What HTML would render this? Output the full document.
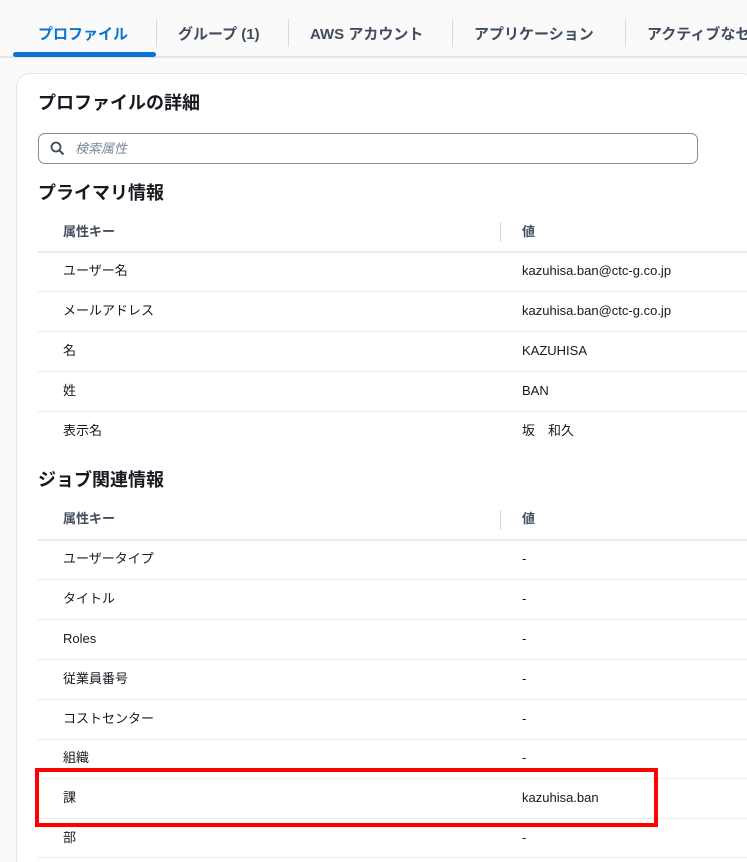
<!DOCTYPE html>
<html><head><meta charset="utf-8"><style>
*{margin:0;padding:0;box-sizing:border-box}
html,body{width:747px;height:862px;overflow:hidden}
body{background:#fafafa;font-family:"Liberation Sans","Noto Sans CJK JP",sans-serif;color:#16191f;position:relative;line-height:16px}
#wrap{position:absolute;left:0;top:0;width:747px;height:862px;overflow:hidden}
.tab{position:absolute;top:26px;font-size:15px;font-weight:bold;color:#414d5c;white-space:nowrap;line-height:18px}
.sep{position:absolute;top:19px;width:1px;height:28px;background:#d5dbdb}
.card{position:absolute;left:16px;top:73px;width:740px;height:800px;background:#fff;border:1px solid #e3e6e8;border-radius:14px}
.abs{position:absolute;white-space:nowrap}
.h1,.h2{font-size:18px;font-weight:bold;line-height:22px}
.cell{font-size:13px;color:#16191f}
.th{font-size:13px;font-weight:bold;color:#414d5c}
.line{position:absolute;left:38px;width:709px;height:1px;background:#e9ebed}
</style></head><body><div id="wrap">
<div class="tab" style="left:38px;color:#0972d3">プロファイル</div>
<div class="sep" style="left:156px"></div>
<div class="tab" style="left:178px">グループ (1)</div>
<div class="sep" style="left:288px"></div>
<div class="tab" style="left:310px">AWS アカウント</div>
<div class="sep" style="left:452px"></div>
<div class="tab" style="left:474px">アプリケーション</div>
<div class="sep" style="left:625px"></div>
<div class="tab" style="left:647px">アクティブなセッション</div>
<div class="abs" style="left:0;top:56px;width:747px;height:2px;background:#e3e6e8"></div>
<div class="abs" style="left:13px;top:52px;width:143px;height:5px;background:#0972d3;border-radius:3px"></div>
<div class="card"></div>
<div class="abs h1" style="left:38px;top:92px">プロファイルの詳細</div>
<div class="abs" style="left:38px;top:133px;width:660px;height:31px;border:1px solid #8c8c94;border-radius:7px"></div>
<svg class="abs" style="left:50px;top:141px" width="15" height="15" viewBox="0 0 15 15"><circle cx="6" cy="6" r="4.5" fill="none" stroke="#414d5c" stroke-width="1.8"/><path d="M9.5 9.5L13.5 13.5" stroke="#414d5c" stroke-width="2"/></svg>
<div class="abs" style="left:75px;top:141px;font-size:13px;font-style:italic;color:#7d8998">検索属性</div>
<div class="abs h2" style="left:38px;top:182px">プライマリ情報</div>
<div class="abs th" style="left:63px;top:224px">属性キー</div>
<div class="abs" style="left:500px;top:222px;width:1px;height:20px;background:#d1d5db"></div>
<div class="abs th" style="left:522px;top:224px">値</div>
<div class="line" style="top:251px;height:2px"></div>
<div class="abs cell" style="left:63px;top:263px">ユーザー名</div><div class="abs cell" style="left:522px;top:263px">kazuhisa.ban@ctc-g.co.jp</div>
<div class="line" style="top:291px"></div>
<div class="abs cell" style="left:63px;top:303px">メールアドレス</div><div class="abs cell" style="left:522px;top:303px">kazuhisa.ban@ctc-g.co.jp</div>
<div class="line" style="top:331px"></div>
<div class="abs cell" style="left:63px;top:343px">名</div><div class="abs cell" style="left:522px;top:343px">KAZUHISA</div>
<div class="line" style="top:371px"></div>
<div class="abs cell" style="left:63px;top:383px">姓</div><div class="abs cell" style="left:522px;top:383px">BAN</div>
<div class="line" style="top:411px"></div>
<div class="abs cell" style="left:63px;top:423px">表示名</div><div class="abs cell" style="left:522px;top:423px">坂　和久</div>
<div class="abs h2" style="left:38px;top:469px">ジョブ関連情報</div>
<div class="abs th" style="left:63px;top:511px">属性キー</div>
<div class="abs" style="left:500px;top:510px;width:1px;height:20px;background:#d1d5db"></div>
<div class="abs th" style="left:522px;top:511px">値</div>
<div class="line" style="top:539px;height:2px"></div>
<div class="abs cell" style="left:63px;top:551px">ユーザータイプ</div><div class="abs cell" style="left:522px;top:551px">-</div>
<div class="line" style="top:579px"></div>
<div class="abs cell" style="left:63px;top:591px">タイトル</div><div class="abs cell" style="left:522px;top:591px">-</div>
<div class="line" style="top:619px"></div>
<div class="abs cell" style="left:63px;top:631px">Roles</div><div class="abs cell" style="left:522px;top:631px">-</div>
<div class="line" style="top:659px"></div>
<div class="abs cell" style="left:63px;top:671px">従業員番号</div><div class="abs cell" style="left:522px;top:671px">-</div>
<div class="line" style="top:699px"></div>
<div class="abs cell" style="left:63px;top:711px">コストセンター</div><div class="abs cell" style="left:522px;top:711px">-</div>
<div class="line" style="top:739px"></div>
<div class="abs cell" style="left:63px;top:750px">組織</div><div class="abs cell" style="left:522px;top:750px">-</div>
<div class="line" style="top:778px"></div>
<div class="abs cell" style="left:63px;top:790px">課</div><div class="abs cell" style="left:522px;top:790px">kazuhisa.ban</div>
<div class="line" style="top:818px"></div>
<div class="abs cell" style="left:63px;top:830px">部</div><div class="abs cell" style="left:522px;top:830px">-</div>
<div class="line" style="top:857px"></div>
<div class="abs" style="left:35px;top:768px;width:623px;height:59px;border:4px solid #f00"></div>
</div></body></html>
